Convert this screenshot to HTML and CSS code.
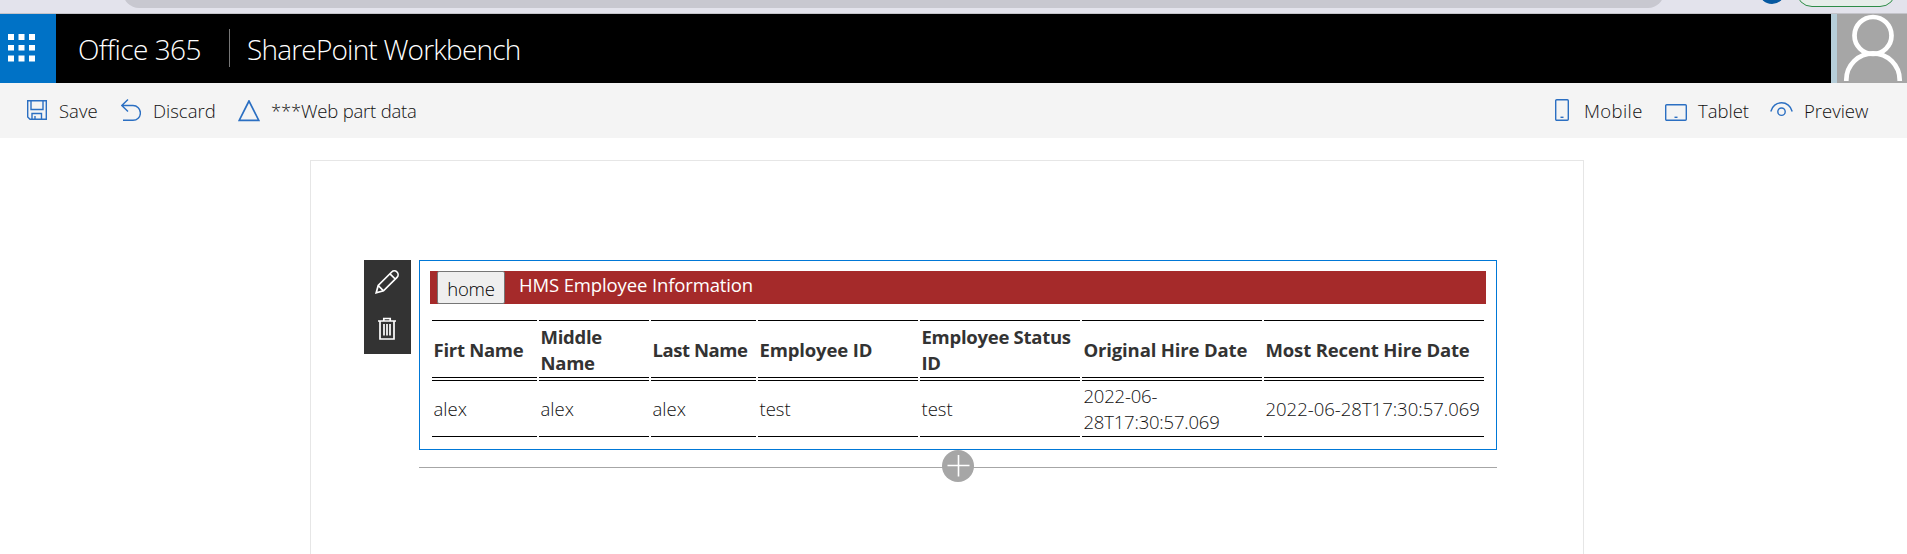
FILE: index.html
```html
<!DOCTYPE html>
<html lang="en">
<head>
<meta charset="utf-8">
<title>SharePoint Workbench</title>
<link rel="stylesheet" href="styles.css">
</head>
<body>
<div class="browser">
  <div class="address"></div>
  <div class="profile"></div>
  <div class="update"></div>
</div>
<header class="suite">
  <div class="launcher">
    <svg width="28" height="28" viewBox="0 0 28 28" fill="#fff"><path d="M0 0h6v6H0zM10.500 0h6v6h-6zM21 0h6v6h-6zM0 11h6v5.500H0zM10.500 11h6v5.500h-6zM21 11h6v5.500h-6zM0 21.500h6v6H0zM10.500 21.500h6v6h-6zM21 21.500h6v6h-6z"/></svg>
  </div>
  <div class="brand"><span class="t-office">Office 365</span></div>
  <div class="product"><span class="t-product">SharePoint Workbench</span></div>
  <div class="avatar">
    <svg width="70" height="69" viewBox="0 0 70 69" fill="none" stroke="#fff" stroke-width="4.700"><circle cx="36" cy="21.500" r="18.500"/><path d="M9.300 67V66a26.500 26.500 0 0 1 53.400 0v1"/></svg>
  </div>
</header>
<nav class="toolbar">
  <div class="group">
    <div class="cmd save">
      <svg width="20" height="20" viewBox="0 0 20 20"><path d="M.700.700h18.600v18.600H3L.700 17zM4 .700v8.800h12V.700M5 19v-5.500h9.500V19M8 19v-3"/></svg><span class="t-save">Save</span>
    </div>
    <div class="cmd discard">
      <svg width="20" height="22" viewBox="0 0 20 22"><path d="M7 .500.800 6.500 7 12.500M1 6.500h11a7.200 7.200 0 0 1 0 14.800H2"/></svg><span class="t-discard">Discard</span>
    </div>
    <div class="cmd data">
      <svg width="22" height="22" viewBox="0 0 22 22"><path stroke-width="1.700" d="M11 1 1.200 20.400h19.600z"/></svg><span class="t-data">***Web part data</span>
    </div>
  </div>
  <div class="group right">
    <div class="cmd mobile">
      <svg width="14" height="22" viewBox="0 0 14 22"><rect x=".700" y=".700" width="12.600" height="20.600" rx="1"/><path d="M5.500 18.300h3"/></svg><span class="t-mobile">Mobile</span>
    </div>
    <div class="cmd tablet">
      <svg width="22" height="17" viewBox="0 0 22 17"><rect x=".700" y=".700" width="20.600" height="15.600" rx="1"/><path d="M9.500 13.300h3"/></svg><span class="t-tablet">Tablet</span>
    </div>
    <div class="cmd preview">
      <svg width="23" height="15" viewBox="0 0 23 15"><path d="M.800 9.500C2 4 6.500.800 11.500.800S21 4 22.200 9.500"/><circle cx="11.500" cy="9.700" r="3.700"/></svg><span class="t-preview">Preview</span>
    </div>
  </div>
</nav>
<main class="canvas">
  <div class="zone">
    <div class="actions">
      <svg width="24" height="24" viewBox="0 0 24 24"><path d="m1.200 22.800 2-7.300L16.700 2a3 3 0 0 1 5.300 5.300L8.500 20.800zM3.200 15.500l5.300 5.300M15 3.800 20.200 9"/></svg>
      <svg width="20" height="24" viewBox="0 0 20 24"><path d="M1 4h18M6.800 4V1.500h6.400V4M3 4v18h14V4M7 7v11.500M10 7v11.500M13 7v11.500"/></svg>
    </div>
    <div class="column">
      <section class="webpart">
        <div class="banner"><button class="home"><span class="t-home">home</span></button><span class="title t-title">HMS Employee Information</span></div>
        <table>
          <colgroup><col class="c1"><col class="c2"><col class="c3"><col class="c4"><col class="c5"><col class="c6"><col class="c7"></colgroup>
          <thead><tr><th>Firt Name</th><th>Middle<br>Name</th><th class="tight">Last Name</th><th class="loose">Employee ID</th><th>Employee Status<br>ID</th><th class="loose">Original Hire Date</th><th class="loose">Most Recent Hire Date</th></tr></thead>
          <tbody><tr><td>alex</td><td>alex</td><td>alex</td><td>test</td><td>test</td><td class="hired">2022-06-<br>28T17:30:57.069</td><td>2022-06-28T17:30:57.069</td></tr></tbody>
        </table>
      </section>
      <div class="add">
        <svg class="plus" width="32" height="32" viewBox="0 0 32 32"><circle cx="16" cy="16" r="16" fill="#a6a6a6"/><path d="M5.500 15.500h22M16.500 5v21.500" stroke="#fff" stroke-width="1.600"/></svg>
      </div>
    </div>
  </div>
</main>
</body>
</html>
```
FILE: styles.css
```css
* { box-sizing: border-box; }
body {
  margin: 0;
  height: 554px;
  overflow: hidden;
  background: #fff;
  color: #111;
  font: 300 18.5px/26px "Open Sans", "Noto Sans", sans-serif;
}
svg { display: block; flex: none; }
span { white-space: nowrap; }

.browser {
  display: flex;
  height: 14px;
  overflow: hidden;
  background: #e3e3ec;
  border-bottom: 1px solid #c4c4ca;
}
.address { width: 1541px; height: 32px; margin: -24px 0 0 123px; background: #c8c8d0; border-radius: 16px; flex: none; }
.profile { width: 26px; height: 26px; margin: -22px 0 0 95px; border-radius: 50%; background: #0558a0; flex: none; }
.update { width: 100px; height: 32px; margin: -25px 0 0 11px; border: 1px solid #2d8c47; border-radius: 16px; background: #e6ede9; flex: none; }

.suite { display: flex; height: 69px; background: #000; color: #fff; font-size: 28px; line-height: 38px; }
.launcher { width: 56px; padding: 20px 0 0 8px; background: #0072c6; }
.brand { width: 174px; height: 38px; margin-top: 15px; padding: 1px 0 0 22px; border-right: 1px solid #777; letter-spacing: -0.55px; }
.product { flex: 1; padding: 16px 0 0 17px; letter-spacing: -0.8px; }
.avatar { width: 76px; border-left: 6px solid #b6ced9; background: #a6a6a6; }

.toolbar { display: flex; justify-content: space-between; height: 55px; padding: 0 0 0 27px; background: #f4f4f4; }
.group { display: flex; }
.cmd { display: flex; align-items: flex-start; }
.cmd span { padding-top: 15px; }
.cmd svg, .actions svg { fill: none; stroke: #2b6fc2; stroke-width: 1.4; }
.cmd.save { width: 94px; gap: 12px; }
.save svg { margin-top: 17px; }
.cmd.discard { width: 117px; gap: 12px; }
.discard svg { margin-top: 16px; }
.cmd.data { gap: 11px; }
.data svg { margin-top: 17px; }
.t-data { letter-spacing: -0.2px; }
.cmd.mobile { width: 110px; gap: 15px; }
.mobile svg { margin-top: 16px; }
.t-mobile { letter-spacing: 0.4px; }
.cmd.tablet { width: 105px; gap: 11px; }
.tablet svg { margin-top: 21px; }
.cmd.preview { width: 137px; gap: 11px; }
.preview svg { margin-top: 19px; }

.canvas { width: 1274px; height: 420px; margin: 22px 0 0 310px; padding: 99px 0 0 53px; border: 1px solid #e6e6e6; }
.zone { display: flex; align-items: flex-start; gap: 8px; }
.actions { width: 47px; height: 94px; display: flex; flex-direction: column; align-items: center; gap: 23px; padding: 10px 1px 0 0; background: #333; }
.actions svg { stroke: #fff; stroke-width: 1.7; }
.column { width: 1078px; }
.webpart { height: 190px; padding: 10px; border: 1px solid #0078d7; }
.banner { display: flex; height: 33px; padding-left: 7px; background: #a52a2a; color: #fff; font-weight: 400; }
.home { width: 68px; height: 33px; padding: 2px 0 0; border: 1px solid #767676; border-radius: 2px; background: #efefef; color: #000; font: inherit; font-weight: 300; line-height: 26px; letter-spacing: -0.2px; }
.title { padding: 1px 0 0 14px; letter-spacing: -0.13px; }
table { width: 1056px; margin-top: 14px; table-layout: fixed; border-collapse: separate; border-spacing: 2px; line-height: 26px; }
.c1 { width: 105px; }
.c2 { width: 110px; }
.c3 { width: 105px; }
.c4, .c5 { width: 160px; }
.c6 { width: 180px; }
th, td { padding: 1px 1.5px; border: solid #000; border-width: 1px 0; text-align: left; vertical-align: middle; white-space: nowrap; }
th { height: 58px; padding: 3px 1.5px 1px; color: #333; font-weight: 700; letter-spacing: -0.27px; }
th.tight { letter-spacing: -0.45px; }
th.loose { letter-spacing: -0.15px; }
td { height: 57px; }
.hired { letter-spacing: -0.2px; }
.add { display: flex; justify-content: center; height: 32px; background: linear-gradient(#a6a6a6, #a6a6a6) 0 17px / 100% 1px no-repeat; }
```
